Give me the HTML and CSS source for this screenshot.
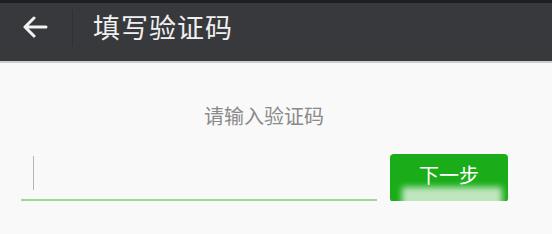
FILE: index.html
```html
<!DOCTYPE html>
<html lang="zh-CN">
<head>
    <meta charset="UTF-8">
    <meta name="viewport" content="width=device-width, initial-scale=1.0">
    <title>填写验证码</title>
    <link rel="stylesheet" href="styles.css">
</head>
<body>
    <div class="top-bar">
        <a class="back" href="#" aria-label="返回">
            <svg width="26" height="22" viewBox="0 0 26 22">
                <path d="M24 11H3M12 2L3 11l9 9" fill="none" stroke="#f2f2f2" stroke-width="3" stroke-linecap="round" stroke-linejoin="round"/>
            </svg>
        </a>
        <span class="divider"></span>
        <h1 class="title">填写验证码</h1>
    </div>

    <div class="content">
        <p class="hint">请输入验证码</p>
        <div class="code-row">
            <div class="code-input">
                <span class="caret"></span>
            </div>
            <button class="next-btn">下一步</button>
        </div>
        <div class="smudge"></div>
    </div>
</body>
</html>
```

FILE: styles.css
```css
body {
    margin: 0;
    background-color: #f9f9f9;
    font-family: "Noto Sans CJK SC", "Noto Sans", sans-serif;
}
.top-bar {
    height: 46px;
    background-color: #38393d;
    border-top: 3px solid #1f1f22;
    border-bottom: 2px solid #cfcfcf;
    display: flex;
    align-items: center;
    padding-bottom: 12px;
}
.back {
    display: flex;
    margin-left: 22px;
    margin-top: 2px;
}
.divider {
    width: 1px;
    height: 36px;
    margin-left: 24px;
    margin-top: 4px;
    background-color: #303135;
}
.title {
    margin: 0 0 0 20px;
    font-size: 27px;
    font-weight: normal;
    color: #f0f0f0;
    letter-spacing: 1px;
}
.content {
    position: relative;
    padding-top: 39px;
}
.hint {
    margin: 0;
    padding-right: 24px;
    text-align: center;
    font-size: 20px;
    color: #8a8a8a;
    line-height: 28px;
}
.code-row {
    display: flex;
    align-items: flex-end;
    padding: 0 44px 0 21px;
    margin-top: 22px;
}
.code-input {
    width: 356px;
    height: 47px;
    border-bottom: 2px solid #9fd896;
    display: flex;
    align-items: center;
}
.caret {
    width: 1px;
    height: 34px;
    margin-left: 12px;
    margin-bottom: 6px;
    background-color: #b5b5b5;
}
.next-btn {
    width: 118px;
    height: 48px;
    margin-left: 13px;
    margin-bottom: -1px;
    background-color: #1aad19;
    color: #fff;
    border: none;
    border-radius: 4px;
    font-family: inherit;
    font-size: 20px;
    padding-bottom: 8px;
}
.smudge {
    position: absolute;
    left: 402px;
    top: 124px;
    width: 100px;
    height: 45px;
    background-color: rgba(248, 250, 248, 0.75);
    filter: blur(3px);
}
```
